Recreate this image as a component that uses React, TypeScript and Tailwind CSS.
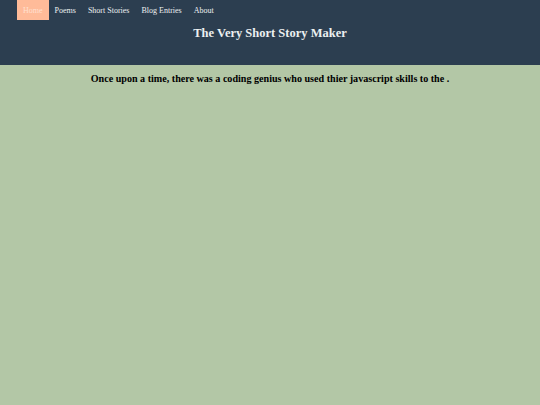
export default function App() {
  const items = ["Home", "Poems", "Short Stories", "Blog Entries", "About"];
  return (
    <div className="min-h-[405px] bg-[#b3c7a6] font-['Liberation_Serif',serif]">
      <header className="h-[65px] bg-[#2c3e50]">
        <nav className="flex pl-[17px]">
          {items.map((t, i) => (
            <span
              key={t}
              className={`block px-[6px] h-[20px] leading-[21px] text-[8px] ${i === 0 ? "bg-[#ffbb99] text-[#ffe0d0]" : "text-[#ecf0f1]"}`}
            >
              {t}
            </span>
          ))}
        </nav>
        <h1 className="text-center text-[12.5px] font-bold text-[#ecf0f1] leading-[24px] mt-[1px]">
          The Very Short Story Maker
        </h1>
      </header>
      <p className="text-center font-bold text-[10.1px] text-black mt-[7px] leading-[14px]">
        Once upon a time, there was a coding genius who used thier javascript skills to the .
      </p>
    </div>
  );
}
